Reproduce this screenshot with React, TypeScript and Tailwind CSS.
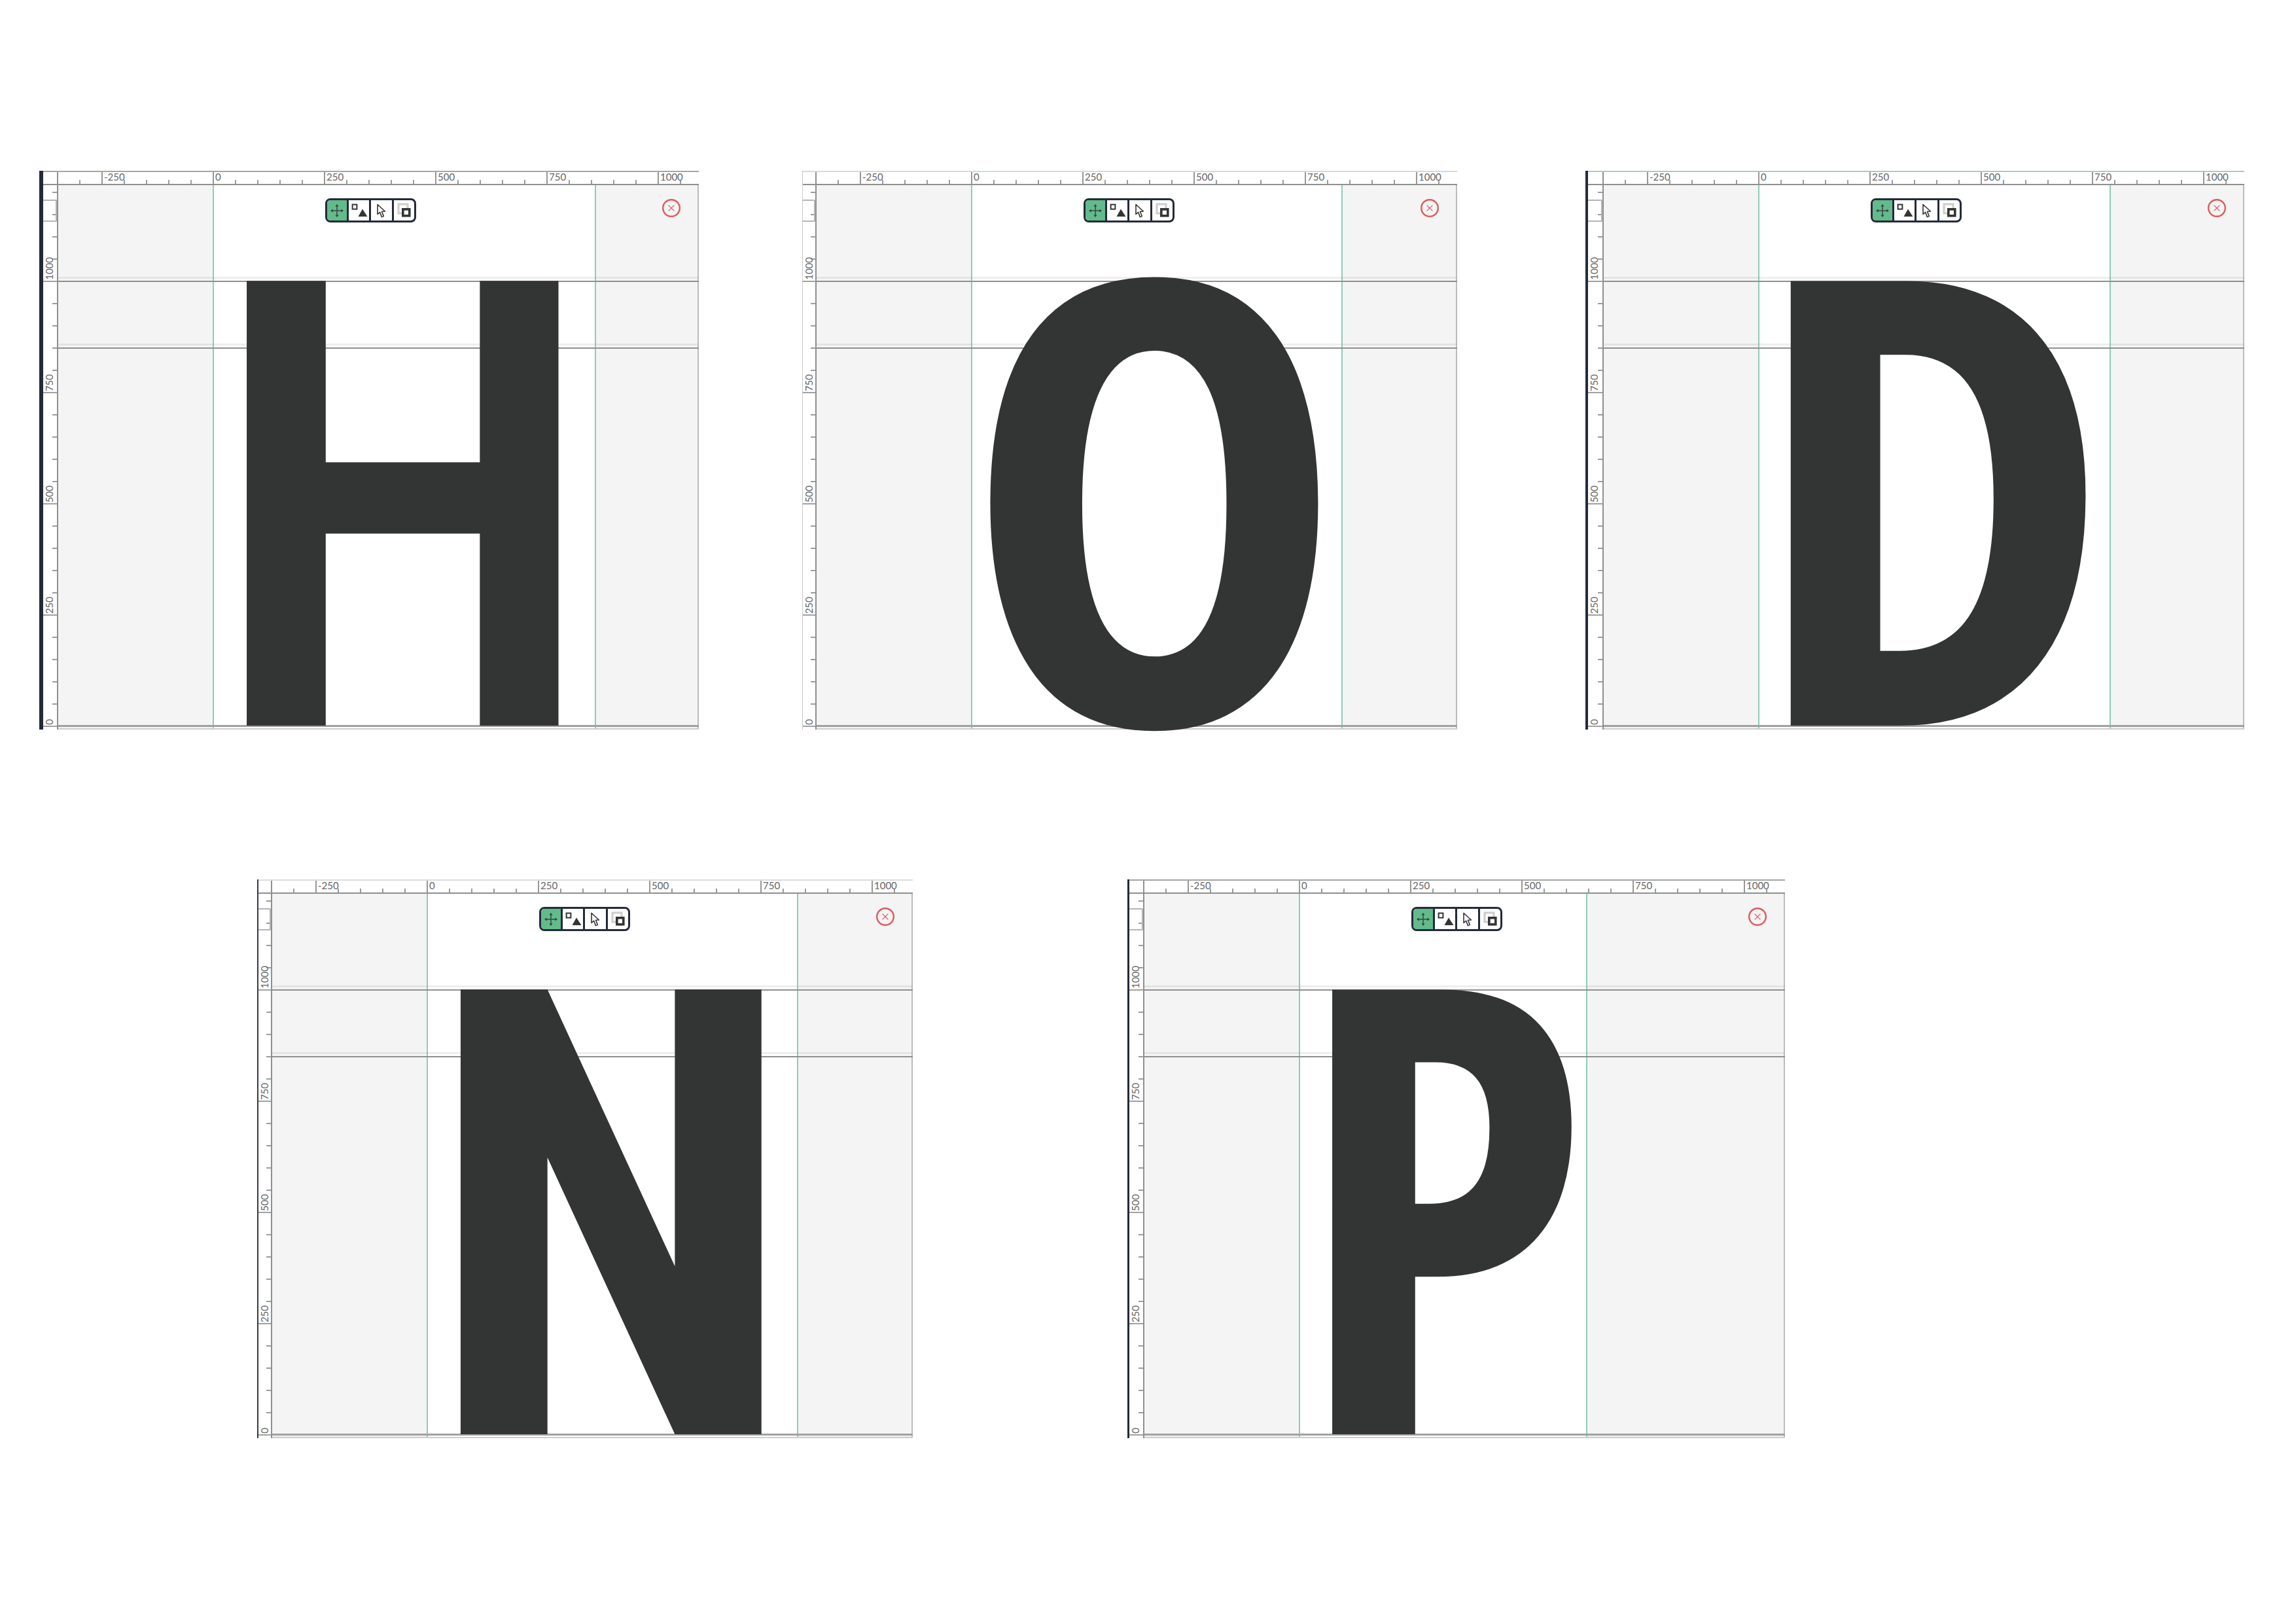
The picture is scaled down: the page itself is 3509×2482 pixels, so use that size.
import React from "react";

type Glyph = {
  ch: string;
  ml: string;
  barClass: string;
  col: number;
  adv: number;
  left: number;
  sx: number;
  topClass: string;
  face: string;
};

const TICK = 34;
const ZERO = 238;
const ROBOTO_BOLD = "top-[159px] font-['Roboto',sans-serif] text-[956px] font-bold";
const ROBOTO_BLACK = "top-[159px] font-['Roboto',sans-serif] text-[956px] font-black";
const OPEN_COND = "top-[117px] font-['Open_Sans',sans-serif] text-[952px] font-bold [font-stretch:75%]";
const OPEN_COND_O = "top-[119px] font-['Open_Sans',sans-serif] text-[944px] font-bold [font-stretch:75%]";

function range(n: number) {
  return Array.from({ length: n }, (_, i) => i);
}

function MoveIcon() {
  return (
    <svg width="24" height="24" viewBox="0 0 24 24" className="block">
      <g fill="#3a3f3f">
        <rect x="11.3" y="4" width="1.4" height="16" />
        <rect x="4" y="11.3" width="16" height="1.4" />
        <path d="M12 2l2.6 3.6h-5.2zM12 22l2.6-3.6h-5.2zM2 12l3.6-2.6v5.2zM22 12l-3.6-2.6v5.2z" />
      </g>
    </svg>
  );
}

function ShapeIcon() {
  return (
    <svg width="28" height="24" viewBox="0 0 28 24" className="block">
      <rect x="3.6" y="2.6" width="6.8" height="7" fill="none" stroke="#333534" strokeWidth="2" />
      <path d="M19 9.5L26.5 21H12.5z" fill="#333534" />
    </svg>
  );
}

function CursorIcon() {
  return (
    <svg width="18" height="24" viewBox="0 0 18 24" className="block">
      <path
        d="M3 2.5V17.5L6.6 14.3L9.4 21.6L12.3 20.4L9.5 13.3L14.4 13Z"
        fill="#fff"
        stroke="#333534"
        strokeWidth="1.6"
        strokeLinejoin="round"
      />
    </svg>
  );
}

function LayerIcon() {
  return (
    <svg width="24" height="26" viewBox="0 0 24 26" className="block">
      <rect x="3" y="3" width="14" height="14" fill="#fff" stroke="#cfcfcf" strokeWidth="3.2" />
      <rect x="9.8" y="10.8" width="10" height="10" fill="#fff" stroke="#333534" strokeWidth="3.6" />
    </svg>
  );
}

function Toolbar() {
  return (
    <div
      className="absolute top-[20px] flex h-[37px] w-[139px] overflow-hidden rounded-[8px] border-[3px] border-[#232a3a] bg-white"
      style={{ left: ZERO + 170 }}
    >
      <div className="flex w-[33px] shrink-0 items-center justify-center border-r-[3px] border-[#232a3a] bg-[#62bb8a]">
        <MoveIcon />
      </div>
      <div className="flex w-[34px] shrink-0 items-center justify-center border-r-[3px] border-[#232a3a]">
        <ShapeIcon />
      </div>
      <div className="flex w-[35px] shrink-0 items-center justify-center border-r-[3px] border-[#232a3a]">
        <CursorIcon />
      </div>
      <div className="flex min-w-0 flex-1 items-center justify-center">
        <LayerIcon />
      </div>
    </div>
  );
}

function CloseIcon() {
  return (
    <svg width="30" height="30" viewBox="0 0 30 30" className="absolute left-[922px] top-[20px]">
      <circle cx="15" cy="15" r="12.8" fill="none" stroke="#e05a5a" strokeWidth="2.4" />
      <path d="M10.6 10.6L19.4 19.4M19.4 10.6L10.6 19.4" stroke="#e05a5a" strokeWidth="1.3" />
    </svg>
  );
}

function HRuler() {
  const labels: Record<number, string> = { 2: "-250", 7: "0", 12: "250", 17: "500", 22: "750", 27: "1000" };
  return (
    <div className="relative h-[20px] w-[981px] border-b-2 border-l-2 border-[#8f8f8f]">
      <svg width="979" height="18" className="absolute left-0 top-0 block">
        {range(29).map((i) => {
          const x = -1 + i * TICK;
          const major = (i + 3) % 5 === 0;
          return (
            <line
              key={i}
              x1={x}
              x2={x}
              y1={major ? 0 : 12}
              y2={18}
              stroke={major ? "#7d7d7d" : "#666"}
              strokeWidth={major ? 1.6 : 1.3}
            />
          );
        })}
      </svg>
      {range(29)
        .filter((i) => labels[i])
        .map((i) => (
          <span
            key={i}
            className="absolute top-0 font-['Lato',sans-serif] text-[15px] leading-[14px] text-[#666666]"
            style={{ left: -1 + i * TICK + 3 }}
          >
            {labels[i]}
          </span>
        ))}
    </div>
  );
}

function VRuler({ width }: { width: number }) {
  const labels: Record<number, string> = { 4: "1000", 9: "750", 14: "500", 19: "250", 24: "0" };
  return (
    <div className="relative h-[832px] shrink-0" style={{ width }}>
      <svg width={width} height="832" className="absolute left-0 top-0 block">
        {range(25).map((k) => {
          const y = 11 + k * TICK;
          const major = labels[k] !== undefined;
          return (
            <line
              key={k}
              x1={major ? 0 : width - 7}
              x2={width}
              y1={y}
              y2={y}
              stroke={major ? "#8a8a8a" : "#666"}
              strokeWidth={major ? 1.6 : 1.3}
            />
          );
        })}
      </svg>
      <div className="absolute left-0 right-0 top-[22px] h-[34px] rounded-r-[2px] border-y-2 border-r-2 border-[#b5b5b5]" />
      {range(25)
        .filter((k) => labels[k] !== undefined)
        .map((k) => (
          <span
            key={k}
            className="absolute left-[3px] rotate-180 font-['Lato',sans-serif] text-[15px] leading-[12px] text-[#666666] [writing-mode:vertical-rl]"
            style={{ bottom: 832 - (11 + k * TICK) + 2 }}
          >
            {labels[k]}
          </span>
        ))}
    </div>
  );
}

function Canvas({ g }: { g: Glyph }) {
  return (
    <div className="relative flex h-[832px] w-[981px] overflow-visible border-l-2 border-[#8f8f8f]">
      <div className="h-full shrink-0 border-r-2 border-[#8fcdb4] bg-[#f4f4f4]" style={{ width: ZERO }} />
      <div className="h-full shrink-0 bg-white" style={{ width: g.adv - 2 }} />
      <div className="h-full min-w-0 flex-1 border-l-2 border-[#8fcdb4] bg-[#f4f4f4]" />
      <div className="h-full w-[2px] shrink-0 bg-[#bcbcbc]" />

      <div className="absolute left-0 right-0 top-[140px] h-[3px] bg-[#8a8a8a]/15" />
      <div className="absolute left-0 right-0 top-[146px] h-[2px] bg-[#8f8f8f]" />
      <div className="absolute left-0 right-0 top-[242px] h-[3px] bg-[#8a8a8a]/15" />
      <div className="absolute left-0 right-0 top-[248px] h-[2px] bg-[#8f8f8f]" />
      <div className="absolute left-0 right-0 top-[825px] h-[3px] bg-[#a0a0a0]" />
      <div className="absolute bottom-0 left-0 right-0 h-[2px] bg-[#cdcdcd]" />

      <span
        className={`absolute origin-top-left select-none whitespace-pre leading-[680px] text-[#333534] ${g.face}`}
        style={{ left: g.left, transform: `scaleX(${g.sx})` }}
      >
        {g.ch}
      </span>

      <Toolbar />
      <CloseIcon />
    </div>
  );
}

function GlyphWindow({ g }: { g: Glyph }) {
  return (
    <div className={`flex h-[854px] shrink-0 ${g.ml}`}>
      <div className={g.barClass} />
      <div className="flex flex-col">
        <div className={`flex ${g.topClass}`}>
          <div className="h-[20px] shrink-0 border-b-2 border-[#8f8f8f]" style={{ width: g.col }} />
          <HRuler />
        </div>
        <div className="flex">
          <VRuler width={g.col} />
          <Canvas g={g} />
        </div>
      </div>
    </div>
  );
}

const row1: Glyph[] = [
  { ch: "H", face: ROBOTO_BOLD, ml: "ml-[60px]", barClass: "w-[6px] shrink-0 bg-[#232a3a]", col: 21, adv: 584, left: 236, sx: 0.861, topClass: "border-t-2 border-[#a5a5a5]" },
  { ch: "O", face: OPEN_COND_O, ml: "ml-[158px]", barClass: "w-[1px] shrink-0 bg-[#c8c8c8]", col: 19, adv: 566, left: 223, sx: 1.047, topClass: "border-t-2 border-[#d8d8d8]" },
  { ch: "D", face: OPEN_COND, ml: "ml-[196px]", barClass: "w-[4px] shrink-0 bg-[#232a3a]", col: 22, adv: 537, left: 222, sx: 1.047, topClass: "border-t-2 border-[#a5cdbc]" },
];

const row2: Glyph[] = [
  { ch: "N", face: ROBOTO_BLACK, ml: "ml-[393px]", barClass: "w-[2px] shrink-0 bg-[#333a48]", col: 19, adv: 566, left: 246, sx: 0.81, topClass: "border-t-2 border-[#dddddd]" },
  { ch: "P", face: OPEN_COND, ml: "ml-[328px]", barClass: "w-[3px] shrink-0 bg-[#232a3a]", col: 21, adv: 439, left: 228, sx: 0.97, topClass: "border-t-2 border-[#a5a5a5]" },
];

export default function App() {
  return (
    <div className="h-[2482px] w-[3509px] overflow-hidden bg-white pt-[261px]">
      <div className="flex">
        {row1.map((g) => (
          <GlyphWindow key={g.ch} g={g} />
        ))}
      </div>
      <div className="mt-[229px] flex">
        {row2.map((g) => (
          <GlyphWindow key={g.ch} g={g} />
        ))}
      </div>
    </div>
  );
}
